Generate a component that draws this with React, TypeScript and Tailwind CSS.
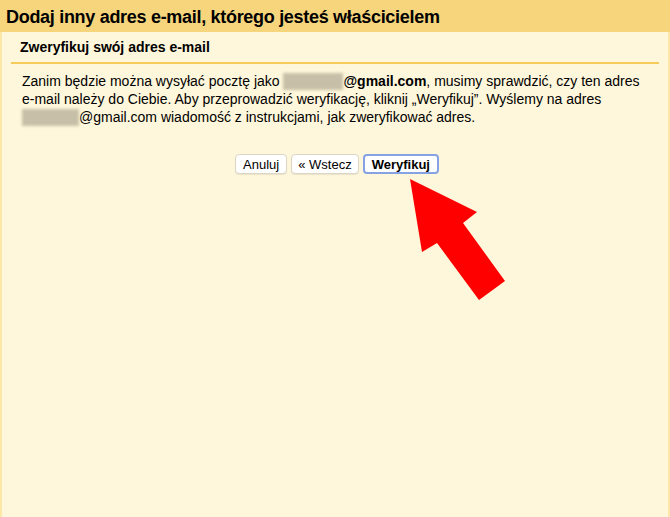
const font = { fontFamily: '"Liberation Sans", Arial, sans-serif' };

function Blur({ width }: { width: string }) {
  return <span className={`inline-block ${width} h-[17px] align-[-4px] bg-[#c7bfa7] blur-[1.5px]`} />;
}

// red annotation arrow drawn over the page
function Arrow() {
  return (
    <svg className="absolute left-[405px] top-[175px]" width="105" height="130" viewBox="0 0 105 130">
      <polygon points="5,4 72,37 58,48 100,106 74,125 32,68 17,77" fill="#ff0000" />
    </svg>
  );
}

const btn = 'h-[20px] rounded-[4px] bg-white text-[13px] leading-none';

export default function App() {
  return (
    <div className="relative flex min-h-screen w-full flex-col bg-[#fff6da] text-black" style={font}>
      <div className="flex h-8 items-center bg-[#f6d57c] px-1.5">
        <h1 className="pt-[2px] text-[18px] font-bold tracking-[-0.3px]">Dodaj inny adres e-mail, którego jesteś właścicielem</h1>
      </div>
      <div className="flex flex-1 flex-col border-l-2 border-r-2 border-[#fce7a6] bg-[#fff7db]">
        <div className="px-[18px] py-[7px]">
          <h2 className="text-[14px] font-bold leading-4">Zweryfikuj swój adres e-mail</h2>
        </div>
        <div className="mx-[9px] h-[2px] bg-[#f7cc5b]" />
        <p className="mt-[8px] pl-[20px] pr-[14px] text-[14px] leading-[18px]">
          Zanim będzie można wysyłać pocztę jako <Blur width="w-[60px]" />
          <b>@gmail.com</b>, musimy sprawdzić, czy ten adres e-mail należy do Ciebie. Aby przeprowadzić weryfikację,
          kliknij „Weryfikuj”. Wyślemy na adres <Blur width="w-[57px]" />
          @gmail.com wiadomość z instrukcjami, jak zweryfikować adres.
        </p>
        <div className="mt-[28px] flex justify-center gap-[4px] pl-[4px]">
          <button className={`${btn} border border-[#dcd6c4] px-[7px] shadow-[0_1px_1px_rgba(0,0,0,0.08)]`}>Anuluj</button>
          <button className={`${btn} border border-[#dcd6c4] px-[6px] shadow-[0_1px_1px_rgba(0,0,0,0.08)]`}>« Wstecz</button>
          <button className={`${btn} border-2 border-[#86a2e2] px-[7px] font-bold`}>Weryfikuj</button>
        </div>
      </div>
      <Arrow />
    </div>
  );
}
